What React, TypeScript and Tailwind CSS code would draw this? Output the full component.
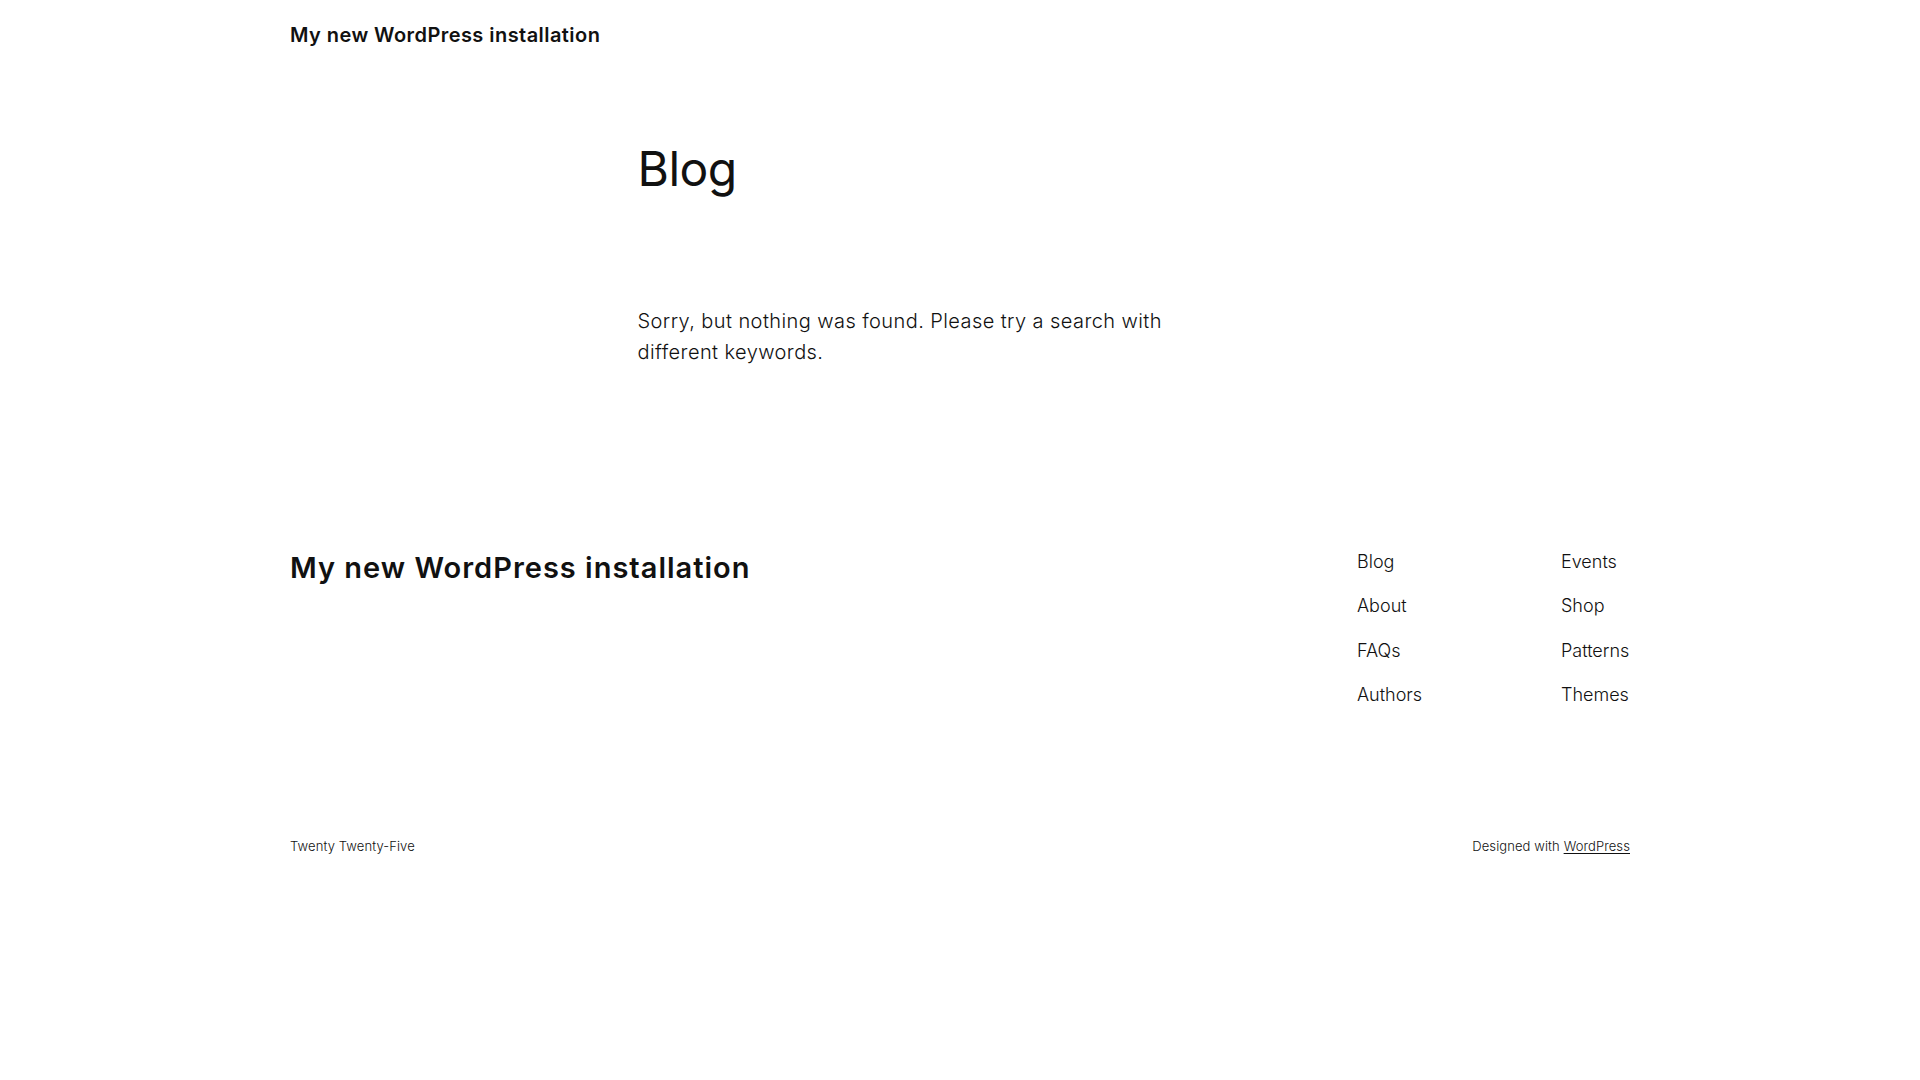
const navLeft = ["Blog", "About", "FAQs", "Authors"];
const navRight = ["Events", "Shop", "Patterns", "Themes"];

function NavColumn({ items }: { items: string[] }) {
  return (
    <ul className="flex flex-col gap-[17.5px]">
      {items.map((item) => (
        <li key={item}>
          <a href="#" className="whitespace-nowrap text-[18px] leading-[27px] font-light text-[#111111]">
            {item}
          </a>
        </li>
      ))}
    </ul>
  );
}

export default function App() {
  return (
    <div className="min-h-screen w-full bg-white text-[#111111] font-['Inter','Liberation_Sans',sans-serif]">
      <header className="mx-auto w-[1340px] pt-[21px] pb-[23px]">
        <a href="#" className="whitespace-nowrap text-[20px] leading-[28px] font-semibold tracking-[0.44px]">
          My new WordPress installation
        </a>
      </header>

      <main className="mx-auto w-[645px] pt-[68px]">
        <h1 className="text-[48px] leading-[1.2] font-normal tracking-[-0.5px]">Blog</h1>
        <p className="mt-[108px] max-w-[590px] text-[20px] leading-[31px] font-light tracking-[0.42px]">
          Sorry, but nothing was found. Please try a search with different keywords.
        </p>
      </main>

      <footer className="mx-auto w-[1340px] pt-[180px]">
        <div className="flex items-start justify-between">
          <a href="#" className="mt-[3px] whitespace-nowrap text-[29px] leading-[1.2] font-semibold tracking-[1px]">
            My new WordPress installation
          </a>
          <nav className="grid grid-cols-[204px_69px]">
            <NavColumn items={navLeft} />
            <NavColumn items={navRight} />
          </nav>
        </div>
        <div className="mt-[129px] flex items-center justify-between text-[13px] leading-[1.4] font-light tracking-[0.1px]">
          <p>Twenty Twenty-Five</p>
          <p>
            Designed with{" "}
            <a href="#" className="underline underline-offset-2 decoration-1">
              WordPress
            </a>
          </p>
        </div>
      </footer>
    </div>
  );
}
